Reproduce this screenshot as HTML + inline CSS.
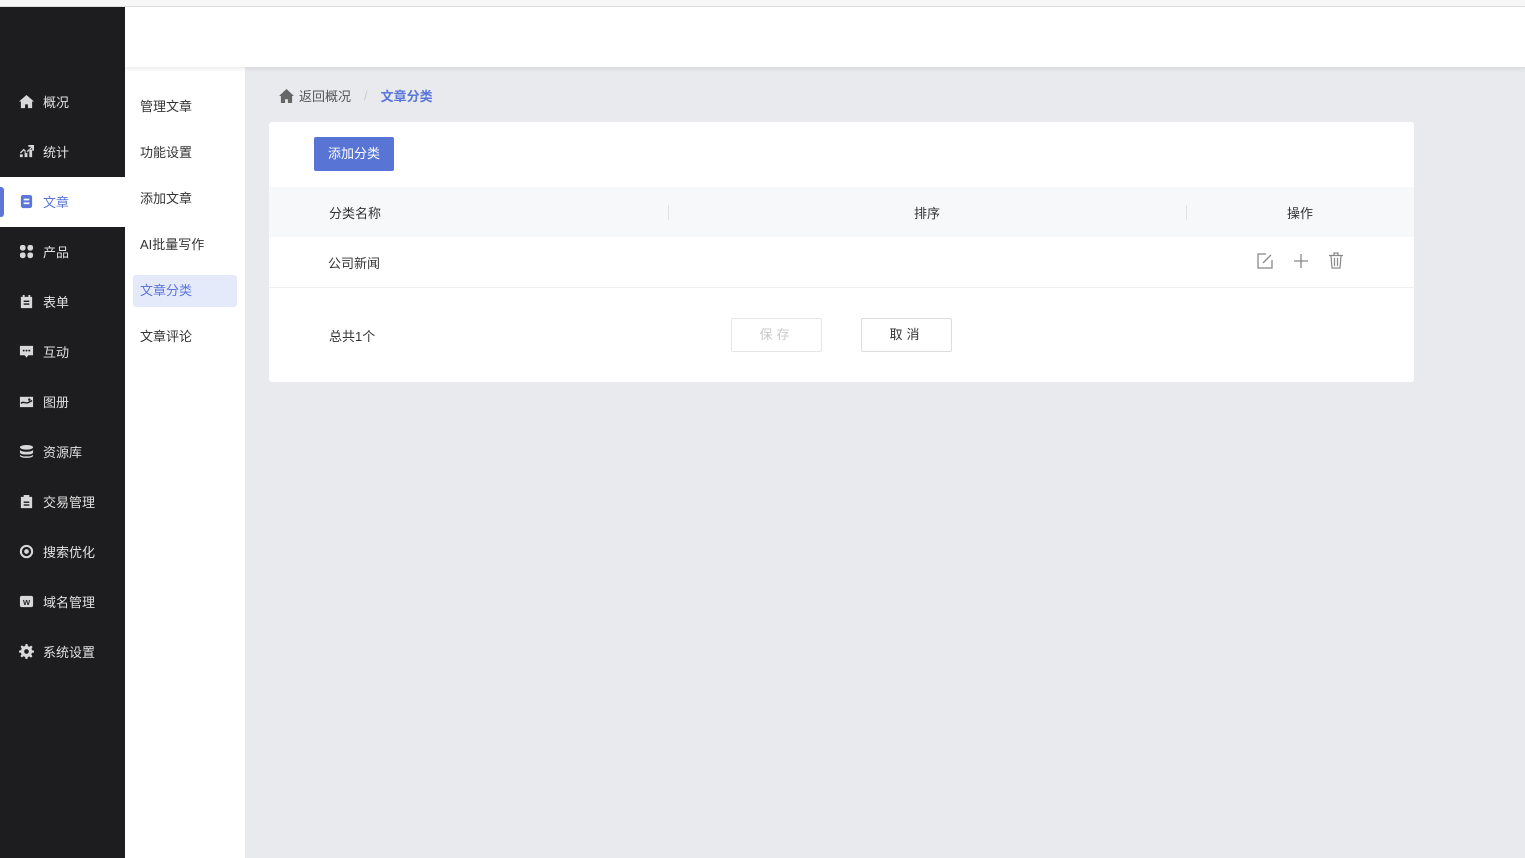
<!DOCTYPE html>
<html><head><meta charset="utf-8"><style>
*{margin:0;padding:0;box-sizing:border-box}
body{width:1525px;height:858px;overflow:hidden;background:#e9eaee;font-family:"Liberation Sans","Noto Sans CJK SC",sans-serif;font-size:13px;color:#333;position:relative}
.top{position:absolute;left:0;top:0;width:1525px;height:7px;background:#f7f7f7;border-bottom:1px solid #ddd}
.side{position:absolute;left:0;top:7px;width:125px;height:851px;background:#1d1d1f}
.hdr{position:absolute;left:125px;top:7px;right:0;height:60px;background:#fff;box-shadow:0 2px 4px rgba(0,0,0,.08);z-index:2}
.item{position:absolute;left:0;width:125px;height:50px;color:#e0e0e0;display:flex;align-items:center;padding-left:19px;font-size:13px;padding-bottom:2px}
.item svg{width:15px;height:15px;margin-right:9px;fill:#d8d8d8}
.active{background:#fff;color:#5b76d8}
.active svg{fill:#5b76d8}
.sub{position:absolute;left:125px;top:67px;width:120px;height:791px;background:#fff}
.sub div{position:absolute;left:8px;width:104px;height:32px;line-height:32px;padding-left:7px;color:#333}
.card{position:absolute;left:269px;top:122px;width:1145px;height:260px;background:#fff;border-radius:3px}
.btn{position:absolute;left:45px;top:15px;width:80px;height:34px;background:#5875d6;color:#fff;line-height:34px;text-align:center;border-radius:2px}
.th{position:absolute;left:0;top:65px;width:1145px;height:50px;background:#f7f8fa}
.row{position:absolute;left:0;top:115px;width:1145px;height:51px;border-bottom:1px solid #eee}
.t{position:absolute}
.b2{position:absolute;top:196px;width:91px;height:34px;border:1px solid #ddd;border-radius:2px;text-align:center;line-height:32px;letter-spacing:4px}
</style></head><body>
<div class="top"></div>
<div class="side">
<div class="item" style="top:70px;border-bottom-right-radius:6px"><svg viewBox="0 0 16 16"><path d="M8 1L0 8h2v7h4.5v-4h3v4H14V8h2z"/></svg>概况</div>
<div class="item" style="top:120px;border-bottom-right-radius:6px;background:#1d1d1f"><svg viewBox="0 0 16 16"><path d="M1 14h3v-3H1zM6 14h3V8H6zM11 14h3V6h-3zM1 9l4-4 3 3 5-5h-3V1h6v6h-2V4L8 10 5 7 2 10z"/></svg>统计</div>
<div class="item active" style="top:170px"><svg viewBox="0 0 16 16"><rect x="2" y="1" width="12" height="14" rx="2.5"/><rect x="5" y="5" width="6" height="1.8" fill="#fff"/><rect x="5" y="9" width="6" height="1.8" fill="#fff"/></svg>文章</div>
<div style="position:absolute;left:0;top:180px;width:4px;height:30px;background:#5b76d8;border-radius:0 3px 3px 0"></div>
<div class="item" style="top:220px;border-top-right-radius:6px"><svg viewBox="0 0 16 16"><rect x="1" y="1" width="6" height="6" rx="2.5"/><rect x="9" y="1" width="6" height="6" rx="2.5"/><rect x="1" y="9" width="6" height="6" rx="2.5"/><rect x="9" y="9" width="6" height="6" rx="2.5"/></svg>产品</div>
<div class="item" style="top:270px"><svg viewBox="0 0 16 16"><path d="M2 3h12v12H2zM4 1h2v3H4zM10 1h2v3h-2z"/><rect x="5" y="7" width="6" height="1.5" fill="#1d1d1f"/><rect x="5" y="10" width="6" height="1.5" fill="#1d1d1f"/></svg>表单</div>
<div class="item" style="top:320px"><svg viewBox="0 0 16 16"><path d="M1 2h14v10H10l-2 2.5L6 12H1z"/><circle cx="5" cy="7" r="1" fill="#1d1d1f"/><circle cx="8" cy="7" r="1" fill="#1d1d1f"/><circle cx="11" cy="7" r="1" fill="#1d1d1f"/></svg>互动</div>
<div class="item" style="top:370px"><svg viewBox="0 0 16 16"><path d="M1 3h14v11H1z"/><path d="M2 10c3-3 5 1 8-1l4-2" stroke="#1d1d1f" stroke-width="1.5" fill="none"/><circle cx="11" cy="6" r="1.3" fill="#1d1d1f"/></svg>图册</div>
<div class="item" style="top:420px"><svg viewBox="0 0 16 16"><ellipse cx="8" cy="3.5" rx="7" ry="2.5"/><path d="M1 6c0 3 14 3 14 0v3c0 3-14 3-14 0zM1 11c0 3 14 3 14 0v1.5c0 3-14 3-14 0z"/></svg>资源库</div>
<div class="item" style="top:470px"><svg viewBox="0 0 16 16"><path d="M2 3h12v12H2zM5 1h6v3H5z"/><rect x="5" y="8" width="6" height="1.5" fill="#1d1d1f"/><rect x="5" y="11" width="6" height="1.5" fill="#1d1d1f"/></svg>交易管理</div>
<div class="item" style="top:520px"><svg viewBox="0 0 16 16"><circle cx="8" cy="8" r="6" fill="none" stroke="#d8d8d8" stroke-width="2.2"/><circle cx="8" cy="8" r="2.5"/></svg>搜索优化</div>
<div class="item" style="top:570px"><svg viewBox="0 0 16 16"><rect x="1" y="2" width="14" height="12" rx="2"/><text x="8" y="11.5" font-size="8" font-weight="bold" text-anchor="middle" fill="#1d1d1f" font-family="Liberation Sans">W</text></svg>域名管理</div>
<div class="item" style="top:620px"><svg viewBox="0 0 16 16"><path d="M7 0h2l.5 2.2 1.6.7 2-1.2 1.4 1.4-1.2 2 .7 1.6L16 7v2l-2.2.5-.7 1.6 1.2 2-1.4 1.4-2-1.2-1.6.7L9 16H7l-.5-2.2-1.6-.7-2 1.2-1.4-1.4 1.2-2-.7-1.6L0 9V7l2.2-.5.7-1.6-1.2-2 1.4-1.4 2 1.2 1.6-.7z"/><circle cx="8" cy="8" r="2.5" fill="#1d1d1f"/></svg>系统设置</div>
</div>
<div class="hdr"></div>
<div class="sub">
<div style="top:24px">管理文章</div>
<div style="top:70px">功能设置</div>
<div style="top:116px">添加文章</div>
<div style="top:162px">AI批量写作</div>
<div style="top:208px;background:#e5eafb;color:#5b76d8;border-radius:3px">文章分类</div>
<div style="top:254px">文章评论</div>
</div>
<div class="t" style="left:279px;top:86px;color:#555;display:flex;align-items:center"><svg width="15" height="14" viewBox="0 0 16 15" style="margin-right:5px"><path d="M8 0L0 7.5h2V15h4.5v-4h3v4H14V7.5h2z" fill="#666"/></svg>返回概况<span style="color:#ccc;margin:0 13px">/</span><span style="color:#5b76d8;font-weight:bold">文章分类</span></div>
<div class="card">
<div class="btn">添加分类</div>
<div class="th">
<span class="t" style="left:60px;top:16px">分类名称</span>
<span class="t" style="left:399px;top:18px;width:1px;height:15px;background:#e2e2e2"></span>
<span class="t" style="left:645px;top:16px">排序</span>
<span class="t" style="left:917px;top:18px;width:1px;height:15px;background:#e2e2e2"></span>
<span class="t" style="left:1018px;top:16px">操作</span>
</div>
<div class="row">
<span class="t" style="left:59px;top:16px">公司新闻</span>
<svg class="t" style="left:988px;top:16px" width="16" height="16" viewBox="0 0 16 16" fill="none" stroke="#888" stroke-width="1.3"><path d="M9 1H1v14h14V7"/><path d="M6 10L14 2"/></svg>
<svg class="t" style="left:1024px;top:16px" width="16" height="16" viewBox="0 0 16 16" stroke="#888" stroke-width="1.3"><path d="M8 1v14M1 8h14"/></svg>
<svg class="t" style="left:1059px;top:15px" width="16" height="17" viewBox="0 0 16 17" fill="none" stroke="#888" stroke-width="1.2"><path d="M1 3.5h14M6 3V1h4v2M3 4l1 12h8l1-12M6.5 6v8M9.5 6v8"/></svg>
</div>
<span class="t" style="left:60px;top:204px">总共1个</span>
<div class="b2" style="left:462px;color:#c8c8c8;border-color:#e6e6e6">保存</div>
<div class="b2" style="left:592px;color:#333">取消</div>
</div>
</body></html>
